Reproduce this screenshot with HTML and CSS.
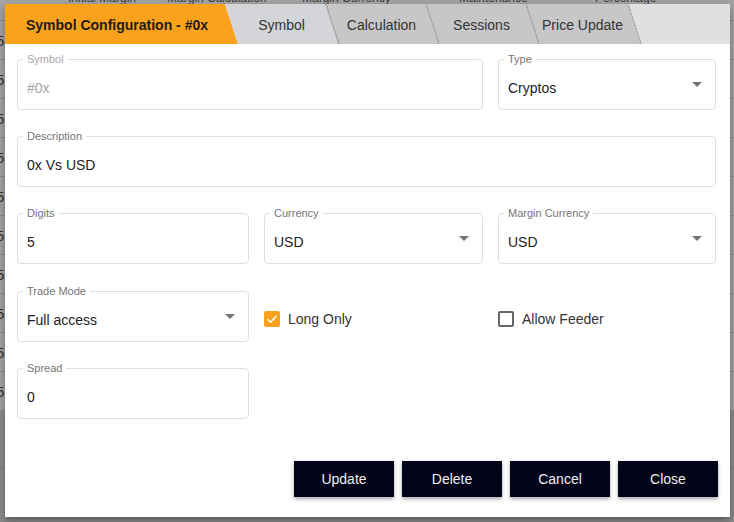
FILE: index.html
```html
<!DOCTYPE html>
<html>
<head>
<meta charset="utf-8">
<link rel="stylesheet" href="styles.css">
</head>
<body>
<div class="bg-page">
  <div class="bg-head">
    <span></span><span>Initial Margin</span><span>Margin Calculation</span><span>Margin Currency</span><span>Maintenance</span><span>Percentage</span>
  </div>
  <div class="bg-row"><span>5</span></div>
  <div class="bg-row"><span>5</span></div>
  <div class="bg-row"><span>5</span></div>
  <div class="bg-row"><span>5</span></div>
  <div class="bg-row"><span>5</span></div>
  <div class="bg-row"><span>5</span></div>
  <div class="bg-row"><span>5</span></div>
  <div class="bg-row"><span>5</span></div>
  <div class="bg-row"><span>5</span></div>
  <div class="bg-row"><span>5</span></div>
  <div class="bg-band"></div>
</div>

<div class="dialog">
  <div class="tabs">
    <div class="tab-title">Symbol Configuration - #0x</div>
    <div class="tab active">Symbol</div>
    <div class="tab">Calculation</div>
    <div class="tab">Sessions</div>
    <div class="tab wide">Price Update</div>
    <div class="tab-rest"></div>
  </div>
  <div class="content">
    <div class="grid">
      <div class="field span2 disabled"><span class="label">Symbol</span>#0x</div>
      <div class="field select"><span class="label">Type</span>Cryptos</div>

      <div class="field span3"><span class="label">Description</span>0x Vs USD</div>

      <div class="field"><span class="label">Digits</span>5</div>
      <div class="field select"><span class="label">Currency</span>USD</div>
      <div class="field select"><span class="label">Margin Currency</span>USD</div>

      <div class="field select lower"><span class="label">Trade Mode</span>Full access</div>
      <div class="check">
        <span class="box on"><svg width="16" height="16" viewBox="0 0 16 16"><path d="M3.6 8.2l3 3 5.8-6.2" fill="none" stroke="#fff" stroke-width="1.5"/></svg></span>
        Long Only
      </div>
      <div class="check"><span class="box off"></span>Allow Feeder</div>

      <div class="field lower"><span class="label">Spread</span>0</div>
    </div>
    <div class="actions">
      <button class="btn">Update</button>
      <button class="btn">Delete</button>
      <button class="btn">Cancel</button>
      <button class="btn">Close</button>
    </div>
  </div>
</div>
</body>
</html>
```

FILE: styles.css
```css
* { box-sizing: border-box; margin: 0; padding: 0; }
html, body { width: 734px; height: 522px; overflow: hidden; }
body {
  background: #8a8a8a;
  font-family: "Liberation Sans", Arial, sans-serif;
  position: relative;
}

/* dimmed page behind the dialog */
.bg-page { width: 734px; }
.bg-head {
  display: grid;
  grid-template-columns: 68px 99px 135px 157px 136px 1fr;
  height: 21px;
  border-bottom: 1px solid #8c8c8c;
  font-size: 12px;
  line-height: 12px;
  color: #3d3d3d;
  background: #a3a3a3;
}
.bg-head span { margin-top: -8px; white-space: nowrap; }
.bg-row {
  height: 39px;
  border-bottom: 1px solid #8c8c8c;
  display: flex;
  align-items: center;
  font-size: 15px;
  color: #333;
  background: #a3a3a3;
}
.bg-row span { margin-left: -4px; }
.bg-band { height: 58px; background: #8b8b8b; border-bottom: 1px solid #7d7d7d; }

/* dialog */
.dialog {
  position: absolute;
  left: 5px;
  top: 4px;
  width: 725px;
  height: 513px;
  background: #fff;
  box-shadow: 0 4px 8px rgba(0, 0, 0, 0.35);
  display: flex;
  flex-direction: column;
}
.tabs { display: flex; height: 40px; flex: none; }
.tab-title {
  width: 233px;
  flex: none;
  background: #faa21b;
  clip-path: polygon(0 0, 220px 0, 233px 100%, 0 100%);
  font-weight: bold;
  font-size: 14px;
  color: #1c1c1c;
  display: flex;
  align-items: center;
  padding-left: 21px;
  padding-top: 2px;
  white-space: nowrap;
}
.tab {
  width: 113px;
  flex: none;
  margin-left: -13px;
  clip-path: polygon(0 0, 100px 0, 113px 100%, 13px 100%);
  display: flex;
  align-items: center;
  justify-content: center;
  padding-top: 2px;
  font-size: 14px;
  color: #333;
  background: linear-gradient(72deg, #a9a9a9 12px, #a9a9a9 14px, #c7c7c7 14px);
  white-space: nowrap;
}
.tab.active { background: #d4d5d9; }
.tab.wide {
  width: 115px;
  clip-path: polygon(0 0, 102px 0, 115px 100%, 13px 100%);
}
.tab-rest {
  flex: 1;
  margin-left: -13px;
  clip-path: polygon(0 0, 100% 0, 100% 100%, 13px 100%);
  background: linear-gradient(72deg, #b0b0b0 12px, #b0b0b0 14px, #e0e0e0 14px);
}

.content {
  flex: 1;
  display: flex;
  flex-direction: column;
  padding: 15px 12px 20px 12px;
}
.grid {
  display: grid;
  grid-template-columns: 232px 219px 218px;
  column-gap: 15px;
  row-gap: 26px;
  grid-auto-rows: 51px;
}
.span2 { grid-column: span 2; }
.span3 { grid-column: span 3; }

.field {
  position: relative;
  border: 1px solid #dedede;
  border-radius: 4px;
  padding: 19px 10px 0 9px;
  font-size: 14px;
  line-height: 18px;
  color: #222;
}
.field.lower { margin-top: 1px; margin-bottom: -1px; }
.field .label {
  position: absolute;
  top: -7px;
  left: 5px;
  padding: 0 4px;
  background: #fff;
  font-size: 11px;
  line-height: 12px;
  color: #757575;
  white-space: nowrap;
}
.field.disabled { color: #a8a8a8; }
.field.disabled .label { color: #a8a8a8; }
.field.select::after {
  content: "";
  position: absolute;
  right: 13px;
  top: 22px;
  border-left: 5px solid transparent;
  border-right: 5px solid transparent;
  border-top: 5px solid #757575;
}

.check {
  display: flex;
  align-items: center;
  gap: 8px;
  padding-top: 7px;
  font-size: 14px;
  color: #333;
}
.box { width: 16px; height: 16px; border-radius: 2px; display: block; flex: none; }
.box svg { display: block; }
.box.on { background: #f9a11b; }
.box.off { border: 2px solid #666; }

.actions {
  margin-top: auto;
  display: flex;
  justify-content: flex-end;
  gap: 8px;
}
.btn {
  width: 100px;
  height: 36px;
  background: #03041a;
  color: #eeeeee;
  border: none;
  font-family: "Liberation Sans", Arial, sans-serif;
  font-size: 14px;
  box-shadow: 0 2px 4px rgba(0, 0, 0, 0.35);
}
```
